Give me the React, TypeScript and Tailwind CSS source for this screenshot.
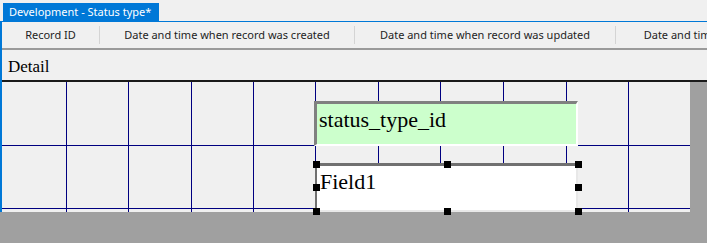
const vLines = [64, 126, 189, 251, 313, 376, 438, 501, 564, 626];
const hLines = [63, 126];

const columns = [
  { label: 'Record ID', width: 'w-[98px]' },
  { label: 'Date and time when record was created', width: 'w-[255px]' },
  { label: 'Date and time when record was updated', width: 'w-[261px]' },
  { label: 'Date and time when record was deleted', width: 'w-[261px]' },
];

// selection handle centres, canvas coords
const handles = [
  [314, 82], [445, 82], [576, 82],
  [314, 105], [576, 105],
  [314, 129], [445, 129], [576, 129],
];

function GridLines() {
  return (
    <svg className="absolute inset-0" width={688} height={130}>
      {vLines.map((x) => (
        <line key={x} x1={x + 0.5} y1={0} x2={x + 0.5} y2={130} stroke="#000080" strokeWidth={1} />
      ))}
      {hLines.map((y) => (
        <line key={y} x1={0} y1={y + 0.5} x2={688} y2={y + 0.5} stroke="#000080" strokeWidth={1} />
      ))}
    </svg>
  );
}

export default function App() {
  return (
    <div className="w-[707px] h-[243px] bg-[#f0f0f0] flex flex-col overflow-hidden" style={{ fontFamily: '"Segoe UI", "Noto Sans", sans-serif' }}>
      {/* Document tab */}
      <div className="h-[22px] pl-[3px] pt-[3px] border-b border-[#0078d7] flex shrink-0">
        <div className="h-[18px] w-[156px] bg-[#0078d7] text-white text-[11px] leading-[18px] pl-[6px] whitespace-nowrap">
          Development - Status type*
        </div>
      </div>

      <div className="flex flex-col border-l-2 border-[#0078d7] shrink-0">
        {/* Column header */}
        <div className="h-[28px] flex items-center border-b-2 border-[#9a9a9a] text-[11px] text-[#1e1e1e] whitespace-nowrap overflow-hidden">
          {columns.map((c, i) => (
            <div key={c.label} className={`${c.width} shrink-0 h-[18px] flex items-center justify-center ${i < columns.length - 1 ? 'border-r border-[#d4d4d4]' : ''}`}>
              {c.label}
            </div>
          ))}
        </div>

        {/* Section band */}
        <div className="h-[32px] border-b-2 border-[#1a1a1a] pl-[6px] pt-[7px] text-[17px] leading-[20px] text-black" style={{ fontFamily: '"Liberation Serif", serif' }}>
          Detail
        </div>

        {/* Design surface */}
        <div className="flex h-[130px]">
          <div className="relative w-[688px] h-[130px] bg-[#f0f0f0] shrink-0" style={{ fontFamily: '"Liberation Serif", serif' }}>
            <GridLines />

            <div className="absolute left-[312px] top-[19px] w-[264px] h-[45px] bg-[#ccffcc] border-t-[3px] border-l-[3px] border-r-2 border-b-2 border-t-[#808080] border-l-[#808080] border-r-white border-b-white pl-[2px] pt-[5px] text-[22px] leading-[22px] text-black">
              status_type_id
            </div>

            <div className="absolute left-[313px] top-[81px] w-[263px] h-[49px] bg-white border-t-[3px] border-l-[2px] border-r-2 border-b-2 border-t-[#707070] border-l-[#707070] border-r-[#e8e8e8] border-b-[#e8e8e8] pl-[3px] pt-[5px] text-[22px] leading-[22px] text-black">
              Field1
            </div>

            {handles.map(([x, y]) => (
              <div key={`${x}-${y}`} className="absolute w-[7px] h-[7px] bg-black z-10" style={{ left: x - 3, top: y - 3 }} />
            ))}
          </div>
          <div className="flex-1 bg-[#a0a0a0]" />
        </div>
      </div>

      <div className="flex-1 bg-[#a0a0a0]" />
    </div>
  );
}
